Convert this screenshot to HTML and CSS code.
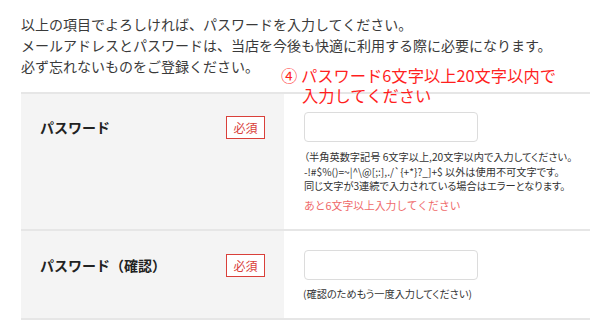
FILE: index.html
```html
<!DOCTYPE html>
<html lang="ja">
<head>
<meta charset="utf-8">
<link rel="stylesheet" href="styles.css">
</head>
<body>
<div class="page">
  <p class="intro">以上の項目でよろしければ、パスワードを入力してください。<br>メールアドレスとパスワードは、当店を今後も快適に利用する際に必要になります。<br>必ず忘れないものをご登録ください。</p>
  <div class="form">
    <div class="row row-first">
      <div class="head">
        <span class="label">パスワード</span>
        <span class="req">必須</span>
      </div>
      <div class="body">
        <div class="input"></div>
        <p class="help">（半角英数字記号 6文字以上,20文字以内で入力してください。<br>-!#$%()=~|^\@[;:],./`{+*}?_]+$ 以外は使用不可文字です。<br>同じ文字が3連続で入力されている場合はエラーとなります。</p>
        <p class="warn">あと6文字以上入力してください</p>
      </div>
    </div>
    <div class="row row-second">
      <div class="head">
        <span class="label">パスワード（確認）</span>
        <span class="req">必須</span>
      </div>
      <div class="body">
        <div class="input"></div>
        <p class="help help-confirm">(確認のためもう一度入力してください)</p>
      </div>
    </div>
  </div>
  <div class="note">④ パスワード6文字以上20文字以内で<br>入力してください</div>
</div>
</body>
</html>
```
FILE: styles.css
```css
html, body {
  margin: 0;
  padding: 0;
  background: #fff;
}
body {
  font-family: "Noto Sans CJK JP", "Noto Sans", sans-serif;
  color: #333;
  width: 590px;
  height: 332px;
  overflow: hidden;
}
.page {
  position: relative;
  padding: 14px 0 0 21px;
}
.intro {
  margin: 0 0 15px;
  font-size: 14px;
  line-height: 21px;
  color: #3a3a3a;
  white-space: nowrap;
}
.form {
  border-top: 2px solid #e6e6e6;
}
.row {
  display: flex;
  border-bottom: 2px solid #e6e6e6;
}
.head {
  flex: 0 0 263px;
  width: 263px;
  box-sizing: border-box;
  background: #f4f4f4;
  padding: 18px 19px 0 19px;
  display: flex;
  align-items: flex-start;
  justify-content: space-between;
}
.row-second .head {
  padding-top: 19px;
}
.label {
  height: 30px;
  line-height: 30px;
  font-size: 14px;
  font-weight: bold;
  color: #222;
}
.req {
  margin-top: 4px;
  width: 39px;
  height: 23px;
  box-sizing: border-box;
  border: 1px solid #d9403a;
  color: #d9403a;
  font-size: 12px;
  line-height: 21px;
  text-align: center;
  background: #fff;
}
.body {
  flex: 1;
  min-width: 0;
  padding: 18px 0 16px 20px;
}
.row-second .body {
  padding: 19px 0 17px 20px;
}
.input {
  width: 174px;
  height: 30px;
  box-sizing: border-box;
  border: 1px solid #dcdcdc;
  border-radius: 4px;
  background: #fff;
}
.help {
  margin: 8px 0 0;
  font-size: 10.2px;
  line-height: 14.5px;
  color: #333;
  white-space: nowrap;
  font-feature-settings: "palt";
}
.help-confirm {
  margin-top: 7px;
  margin-left: -1px;
}
.warn {
  margin: 4px 0 0;
  font-size: 10.8px;
  line-height: 15px;
  color: #ef6a6a;
}
.note {
  position: absolute;
  left: 281px;
  top: 65px;
  padding-left: 21px;
  text-indent: -21px;
  font-size: 16.3px;
  line-height: 20px;
  color: #ff1f1f;
  white-space: nowrap;
}
```
